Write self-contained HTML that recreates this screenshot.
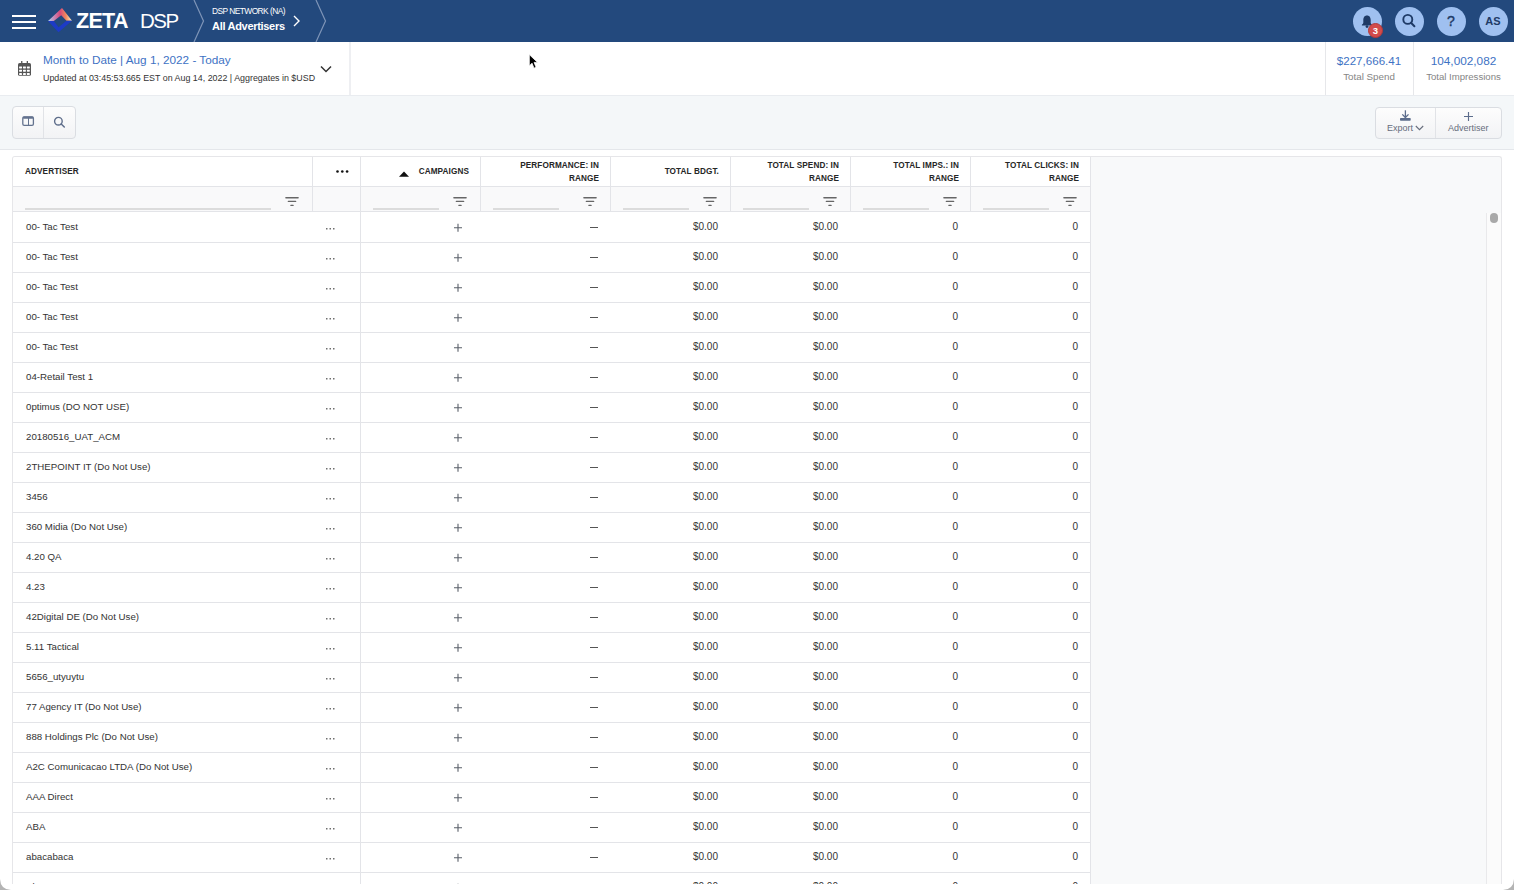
<!DOCTYPE html><html><head><meta charset="utf-8"><style>
*{box-sizing:border-box;margin:0;padding:0}
html,body{width:1514px;height:890px;overflow:hidden;background:#fff;font-family:"Liberation Sans",sans-serif;}
.abs{position:absolute} svg{display:block}
#hdr{position:absolute;left:0;top:0;width:1514px;height:42px;background:#23497d;}
#sub{position:absolute;left:0;top:42px;width:1514px;height:53px;background:#fff;}
#tb{position:absolute;left:0;top:95px;width:1514px;height:55px;background:#f4f7f9;border-bottom:1px solid #e4e7eb;border-top:1px solid #e9ecf0}
.btng{position:absolute;border:1px solid #dadde2;border-radius:4px;background:linear-gradient(#fdfdfd,#f2f3f5);}
#wrap{position:absolute;left:12px;top:156px;width:1490px;height:728px;background:#f8f9fa;border:1px solid #e6e6e9;border-bottom:none;border-radius:3px 3px 0 0;overflow:hidden}
.hc{position:absolute;font-weight:bold;font-size:8.2px;color:#262626;text-align:right;line-height:13px;letter-spacing:0.1px}
.vl{position:absolute;width:1px;background:#e3e4e8}
.hl{position:absolute;height:1px;background:#e3e4e8}
.rt{position:absolute;font-size:9.7px;color:#333;white-space:nowrap;line-height:12px}
.num{position:absolute;font-size:10px;color:#333;white-space:nowrap;text-align:right;line-height:12px}
</style></head><body>
<div id="hdr">
<div class="abs" style="left:12px;top:15px;width:24px;height:2px;background:#fff"></div>
<div class="abs" style="left:12px;top:21px;width:24px;height:2px;background:#fff"></div>
<div class="abs" style="left:12px;top:27px;width:24px;height:2px;background:#fff"></div>
<svg class="abs" style="left:0;top:0" width="80" height="42" viewBox="0 0 80 42">
<defs><linearGradient id="lg1" x1="48" y1="0" x2="72" y2="0" gradientUnits="userSpaceOnUse"><stop offset="0" stop-color="#a8d0f2"/><stop offset="0.25" stop-color="#c78bb8"/><stop offset="0.5" stop-color="#d8497a"/><stop offset="0.75" stop-color="#f08a5c"/><stop offset="1" stop-color="#f8f4d0"/></linearGradient></defs>
<path d="M48,21 L62,8 L72,20.7 L66.5,20.7 L61.2,15.3 L53.8,21 Z" fill="url(#lg1)"/>
<path d="M48,21 L53.8,21 L58.6,27.3 L66.5,20.7 L72,20.7 L58.5,32.3 Z" fill="#1d3bc6"/>
</svg>
<div class="abs" style="left:76px;top:9px;font-size:21.5px;font-weight:bold;color:#fff;letter-spacing:-0.7px;line-height:24px">ZETA</div>
<div class="abs" style="left:140px;top:8.5px;font-size:20.5px;color:#fff;line-height:24px;letter-spacing:-1.5px">DSP</div>
<svg class="abs" style="left:0;top:0;display:block" width="1514" height="42"><path d="M194 0 L203.5 21 L194 42" fill="none" stroke="#7f95b8" stroke-width="1.2"/><path d="M316 0 L325.5 21 L316 42" fill="none" stroke="#7f95b8" stroke-width="1.2"/><path d="M294 16 L299 21 L294 26" fill="none" stroke="#fff" stroke-width="1.4"/></svg>
<div class="abs" style="left:212px;top:6px;font-size:8.4px;color:#fff;line-height:10px;letter-spacing:-0.55px">DSP NETWORK (NA)</div>
<div class="abs" style="left:212px;top:20px;font-size:11px;font-weight:bold;color:#fff;line-height:13px;letter-spacing:-0.3px">All Advertisers</div>
<div class="abs" style="left:1352.5px;top:6.6px;width:29px;height:29px;border-radius:50%;background:#9fc0f0"></div>
<div class="abs" style="left:1394.5px;top:6.6px;width:29px;height:29px;border-radius:50%;background:#9fc0f0"></div>
<div class="abs" style="left:1436.5px;top:6.6px;width:29px;height:29px;border-radius:50%;background:#9fc0f0"></div>
<div class="abs" style="left:1478.5px;top:6.6px;width:29px;height:29px;border-radius:50%;background:#9fc0f0"></div>
<svg class="abs" style="left:1352px;top:6px" width="30" height="30" viewBox="0 0 30 30"><path d="M15 9.4 C12.2 9.4 11.3 11.7 11.3 14 L11.3 16.8 C11.3 17.7 10.4 18.3 9.9 18.8 L9.9 19.5 L20.1 19.5 L20.1 18.8 C19.6 18.3 18.7 17.7 18.7 16.8 L18.7 14 C18.7 11.7 17.8 9.4 15 9.4 Z" fill="#1e3a66"/><circle cx="15" cy="20.6" r="1.4" fill="#1e3a66"/></svg>
<div class="abs" style="left:1367.5px;top:22.7px;width:15.8px;height:15.8px;border-radius:50%;background:#d24b4b;border:1px solid #b33a3a;color:#fff;font-size:9.5px;font-weight:bold;text-align:center;line-height:13.5px">3</div>
<svg class="abs" style="left:1394px;top:6px" width="30" height="30" viewBox="0 0 30 30"><circle cx="13.8" cy="13.4" r="4.5" fill="none" stroke="#1e3a66" stroke-width="1.9"/><path d="M17 16.8 L20.4 20.2" stroke="#1e3a66" stroke-width="2" stroke-linecap="round"/></svg>
<div class="abs" style="left:1436px;top:13px;width:30px;text-align:center;font-size:14px;color:#1e3a66;-webkit-text-stroke:0.4px #1e3a66;line-height:16px">?</div>
<div class="abs" style="left:1478px;top:15.4px;width:30px;text-align:center;font-size:11px;font-weight:bold;color:#1e3a66;line-height:13px">AS</div>
</div>
<div id="sub">
<svg class="abs" style="left:17px;top:18px" width="16" height="18" viewBox="0 0 16 18"><rect x="1" y="3" width="13" height="12.8" rx="1.6" fill="#555"/><rect x="4.1" y="1" width="1.3" height="3" fill="#555"/><rect x="9.7" y="1" width="1.3" height="3" fill="#555"/><rect x="2.1" y="6.4" width="2.9" height="2" rx="0.4" fill="#fff"/><rect x="2.1" y="9.7" width="2.9" height="2" rx="0.4" fill="#fff"/><rect x="2.1" y="13.0" width="2.9" height="2" rx="0.4" fill="#fff"/><rect x="6.0" y="6.4" width="2.9" height="2" rx="0.4" fill="#fff"/><rect x="6.0" y="9.7" width="2.9" height="2" rx="0.4" fill="#fff"/><rect x="6.0" y="13.0" width="2.9" height="2" rx="0.4" fill="#fff"/><rect x="9.9" y="6.4" width="2.9" height="2" rx="0.4" fill="#fff"/><rect x="9.9" y="9.7" width="2.9" height="2" rx="0.4" fill="#fff"/><rect x="9.9" y="13.0" width="2.9" height="2" rx="0.4" fill="#fff"/></svg>
<div class="abs" style="left:43px;top:11px;font-size:11.75px;color:#3e72c4;line-height:14px;white-space:nowrap">Month to Date | Aug 1, 2022 - Today</div>
<div class="abs" style="left:43px;top:31px;font-size:8.9px;color:#333;line-height:11px;white-space:nowrap">Updated at 03:45:53.665 EST on Aug 14, 2022 | Aggregates in $USD</div>
<svg class="abs" style="left:319px;top:22px" width="14" height="10"><path d="M2 2.5 L7 7.5 L12 2.5" fill="none" stroke="#333" stroke-width="1.5"/></svg>
<div class="vl" style="left:349px;top:0;height:53px;width:2px;background:#eeeff2"></div>
<div class="vl" style="left:1324.5px;top:0;height:53px;width:1.5px;background:#e6e7ea"></div>
<div class="vl" style="left:1412.5px;top:0;height:53px;width:1.5px;background:#e6e7ea"></div>
<div class="abs" style="left:1325px;top:12px;width:88px;text-align:center;font-size:11.6px;color:#3e72c4;line-height:14px">$227,666.41</div>
<div class="abs" style="left:1325px;top:28.5px;width:88px;text-align:center;font-size:9.8px;color:#858585;line-height:12px">Total Spend</div>
<div class="abs" style="left:1413px;top:12px;width:101px;text-align:center;font-size:11.8px;color:#3e72c4;line-height:14px">104,002,082</div>
<div class="abs" style="left:1413px;top:28.5px;width:101px;text-align:center;font-size:9.6px;color:#858585;line-height:12px">Total Impressions</div>
</div>
<svg class="abs" style="left:525px;top:51px;z-index:10" width="16" height="20" viewBox="0 0 16 20"><path d="M4.3 3.6 L4.3 14.9 L7 12.2 L9 17.2 L11.1 16.3 L9.1 11.4 L12.6 11.4 Z" fill="#000" stroke="#fff" stroke-width="0.8"/></svg>
<div id="tb">
<div class="btng" style="left:12px;top:10px;width:64px;height:33px"></div>
<div class="vl" style="left:43px;top:11px;height:31px;background:#e1e3e7"></div>
<svg class="abs" style="left:22px;top:20px" width="13" height="11" viewBox="0 0 13 11"><rect x="0.8" y="0.8" width="10.6" height="8.6" rx="1.4" fill="none" stroke="#64738f" stroke-width="1.3"/><rect x="0.8" y="0.5" width="10.6" height="2.2" rx="1" fill="#64738f"/><rect x="6" y="1" width="1" height="8.5" fill="#64738f"/></svg>
<svg class="abs" style="left:52px;top:19px" width="14" height="14" viewBox="0 0 14 14"><circle cx="6.4" cy="6.2" r="3.8" fill="none" stroke="#5f6e8b" stroke-width="1.4"/><path d="M9.2 9 L12.3 12" stroke="#5f6e8b" stroke-width="1.5" stroke-linecap="round"/></svg>
<div class="btng" style="left:1375px;top:11px;width:127px;height:32px"></div>
<div class="vl" style="left:1435px;top:12px;height:30px;background:#e1e3e7"></div>
<svg class="abs" style="left:1399px;top:14px" width="13" height="12" viewBox="0 0 13 12"><path d="M6.4 0.3 L6.4 7.4" stroke="#5c6d8c" stroke-width="1.3"/><path d="M3.3 4.4 L6.4 7.5 L9.5 4.4" fill="none" stroke="#5c6d8c" stroke-width="1.3"/><rect x="1" y="8.1" width="10.7" height="2.7" rx="0.7" fill="#5c6d8c"/></svg>
<div class="abs" style="left:1387px;top:26.5px;font-size:9px;color:#666d7c;line-height:10px">Export</div>
<svg class="abs" style="left:1415px;top:29px" width="9" height="6"><path d="M0.8 1 L4.5 4.7 L8.2 1" fill="none" stroke="#666d7c" stroke-width="1.1"/></svg>
<svg class="abs" style="left:1463px;top:14.5px" width="11" height="11"><path d="M5.5 1 L5.5 10 M1 5.5 L10 5.5" stroke="#5c6d8c" stroke-width="1.15"/></svg>
<div class="abs" style="left:1448px;top:26.5px;font-size:9px;color:#666d7c;line-height:10px">Advertiser</div>
</div>
<div id="wrap">
<div class="abs" style="left:0;top:0;width:1077px;height:800px;background:#fff"></div>
<div class="abs" style="left:0;top:30px;width:1077px;height:24px;background:#f9f9fa"></div>
<div class="vl" style="left:1077px;top:0;height:800px"></div>
<div class="hl" style="left:0;top:29px;width:1077px"></div>
<div class="hl" style="left:0;top:54px;width:1077px"></div>
<div class="vl" style="left:299px;top:0;height:54px"></div>
<div class="vl" style="left:347px;top:0;height:800px"></div>
<div class="vl" style="left:467px;top:0;height:54px"></div>
<div class="vl" style="left:597px;top:0;height:54px"></div>
<div class="vl" style="left:717px;top:0;height:54px"></div>
<div class="vl" style="left:837px;top:0;height:54px"></div>
<div class="vl" style="left:957px;top:0;height:54px"></div>
<div class="hc" style="left:12px;top:8.300000000000011px;text-align:left">ADVERTISER</div>
<div class="abs" style="left:323px;top:13px;width:13px;height:3px"><svg width="13" height="3"><circle cx="1.5" cy="1.5" r="1.3" fill="#111"/><circle cx="6.3" cy="1.5" r="1.3" fill="#111"/><circle cx="11.1" cy="1.5" r="1.3" fill="#111"/></svg></div>
<svg class="abs" style="left:386px;top:14px" width="10" height="6"><path d="M0 5.8 L5 0.5 L10 5.8 Z" fill="#111"/></svg>
<div class="hc" style="left:347px;top:8.300000000000011px;width:109px">CAMPAIGNS</div>
<div class="hc" style="left:467px;top:1.6999999999999886px;width:119px">PERFORMANCE: IN<br>RANGE</div>
<div class="hc" style="left:597px;top:8.300000000000011px;width:109px">TOTAL BDGT.</div>
<div class="hc" style="left:717px;top:1.6999999999999886px;width:109px">TOTAL SPEND: IN<br>RANGE</div>
<div class="hc" style="left:837px;top:1.6999999999999886px;width:109px">TOTAL IMPS.: IN<br>RANGE</div>
<div class="hc" style="left:957px;top:1.6999999999999886px;width:109px">TOTAL CLICKS: IN<br>RANGE</div>
<svg class="abs" style="left:272px;top:39px" width="14" height="11"><rect x="0.2" y="1" width="13.6" height="1.4" rx="0.7" fill="#666"/><rect x="2.7" y="4.8" width="8.6" height="1.3" rx="0.6" fill="#666"/><rect x="5.3" y="8.7" width="3.4" height="1.3" rx="0.6" fill="#666"/></svg>
<div class="abs" style="left:12px;top:51px;width:246px;height:2px;background:#dcdcdc"></div>
<svg class="abs" style="left:440px;top:39px" width="14" height="11"><rect x="0.2" y="1" width="13.6" height="1.4" rx="0.7" fill="#666"/><rect x="2.7" y="4.8" width="8.6" height="1.3" rx="0.6" fill="#666"/><rect x="5.3" y="8.7" width="3.4" height="1.3" rx="0.6" fill="#666"/></svg>
<div class="abs" style="left:360px;top:51px;width:66px;height:2px;background:#dcdcdc"></div>
<svg class="abs" style="left:570px;top:39px" width="14" height="11"><rect x="0.2" y="1" width="13.6" height="1.4" rx="0.7" fill="#666"/><rect x="2.7" y="4.8" width="8.6" height="1.3" rx="0.6" fill="#666"/><rect x="5.3" y="8.7" width="3.4" height="1.3" rx="0.6" fill="#666"/></svg>
<div class="abs" style="left:480px;top:51px;width:66px;height:2px;background:#dcdcdc"></div>
<svg class="abs" style="left:690px;top:39px" width="14" height="11"><rect x="0.2" y="1" width="13.6" height="1.4" rx="0.7" fill="#666"/><rect x="2.7" y="4.8" width="8.6" height="1.3" rx="0.6" fill="#666"/><rect x="5.3" y="8.7" width="3.4" height="1.3" rx="0.6" fill="#666"/></svg>
<div class="abs" style="left:610px;top:51px;width:66px;height:2px;background:#dcdcdc"></div>
<svg class="abs" style="left:810px;top:39px" width="14" height="11"><rect x="0.2" y="1" width="13.6" height="1.4" rx="0.7" fill="#666"/><rect x="2.7" y="4.8" width="8.6" height="1.3" rx="0.6" fill="#666"/><rect x="5.3" y="8.7" width="3.4" height="1.3" rx="0.6" fill="#666"/></svg>
<div class="abs" style="left:730px;top:51px;width:66px;height:2px;background:#dcdcdc"></div>
<svg class="abs" style="left:930px;top:39px" width="14" height="11"><rect x="0.2" y="1" width="13.6" height="1.4" rx="0.7" fill="#666"/><rect x="2.7" y="4.8" width="8.6" height="1.3" rx="0.6" fill="#666"/><rect x="5.3" y="8.7" width="3.4" height="1.3" rx="0.6" fill="#666"/></svg>
<div class="abs" style="left:850px;top:51px;width:66px;height:2px;background:#dcdcdc"></div>
<svg class="abs" style="left:1050px;top:39px" width="14" height="11"><rect x="0.2" y="1" width="13.6" height="1.4" rx="0.7" fill="#666"/><rect x="2.7" y="4.8" width="8.6" height="1.3" rx="0.6" fill="#666"/><rect x="5.3" y="8.7" width="3.4" height="1.3" rx="0.6" fill="#666"/></svg>
<div class="abs" style="left:970px;top:51px;width:66px;height:2px;background:#dcdcdc"></div>
<div class="hl" style="left:0;top:85px;width:1077px"></div>
<div class="rt" style="left:13px;top:64px">00- Tac Test</div>
<svg class="abs" style="left:312.5px;top:71px" width="10" height="2"><rect x="0" y="0" width="1.5" height="1.5" fill="#6f6f6f"/><rect x="3.5" y="0" width="1.5" height="1.5" fill="#6f6f6f"/><rect x="7" y="0" width="1.5" height="1.5" fill="#6f6f6f"/></svg>
<svg class="abs" style="left:440px;top:66px" width="10" height="10"><path d="M5 0.8 L5 8.8 M1 4.8 L9 4.8" stroke="#5a606a" stroke-width="1.1"/></svg>
<div class="abs" style="left:577px;top:69.8px;width:8px;height:1.3px;background:#555"></div>
<div class="num" style="left:605px;top:64px;width:100px">$0.00</div>
<div class="num" style="left:725px;top:64px;width:100px">$0.00</div>
<div class="num" style="left:845px;top:64px;width:100px">0</div>
<div class="num" style="left:965px;top:64px;width:100px">0</div>
<div class="hl" style="left:0;top:115px;width:1077px"></div>
<div class="rt" style="left:13px;top:94px">00- Tac Test</div>
<svg class="abs" style="left:312.5px;top:101px" width="10" height="2"><rect x="0" y="0" width="1.5" height="1.5" fill="#6f6f6f"/><rect x="3.5" y="0" width="1.5" height="1.5" fill="#6f6f6f"/><rect x="7" y="0" width="1.5" height="1.5" fill="#6f6f6f"/></svg>
<svg class="abs" style="left:440px;top:96px" width="10" height="10"><path d="M5 0.8 L5 8.8 M1 4.8 L9 4.8" stroke="#5a606a" stroke-width="1.1"/></svg>
<div class="abs" style="left:577px;top:99.8px;width:8px;height:1.3px;background:#555"></div>
<div class="num" style="left:605px;top:94px;width:100px">$0.00</div>
<div class="num" style="left:725px;top:94px;width:100px">$0.00</div>
<div class="num" style="left:845px;top:94px;width:100px">0</div>
<div class="num" style="left:965px;top:94px;width:100px">0</div>
<div class="hl" style="left:0;top:145px;width:1077px"></div>
<div class="rt" style="left:13px;top:124px">00- Tac Test</div>
<svg class="abs" style="left:312.5px;top:131px" width="10" height="2"><rect x="0" y="0" width="1.5" height="1.5" fill="#6f6f6f"/><rect x="3.5" y="0" width="1.5" height="1.5" fill="#6f6f6f"/><rect x="7" y="0" width="1.5" height="1.5" fill="#6f6f6f"/></svg>
<svg class="abs" style="left:440px;top:126px" width="10" height="10"><path d="M5 0.8 L5 8.8 M1 4.8 L9 4.8" stroke="#5a606a" stroke-width="1.1"/></svg>
<div class="abs" style="left:577px;top:129.8px;width:8px;height:1.3px;background:#555"></div>
<div class="num" style="left:605px;top:124px;width:100px">$0.00</div>
<div class="num" style="left:725px;top:124px;width:100px">$0.00</div>
<div class="num" style="left:845px;top:124px;width:100px">0</div>
<div class="num" style="left:965px;top:124px;width:100px">0</div>
<div class="hl" style="left:0;top:175px;width:1077px"></div>
<div class="rt" style="left:13px;top:154px">00- Tac Test</div>
<svg class="abs" style="left:312.5px;top:161px" width="10" height="2"><rect x="0" y="0" width="1.5" height="1.5" fill="#6f6f6f"/><rect x="3.5" y="0" width="1.5" height="1.5" fill="#6f6f6f"/><rect x="7" y="0" width="1.5" height="1.5" fill="#6f6f6f"/></svg>
<svg class="abs" style="left:440px;top:156px" width="10" height="10"><path d="M5 0.8 L5 8.8 M1 4.8 L9 4.8" stroke="#5a606a" stroke-width="1.1"/></svg>
<div class="abs" style="left:577px;top:159.8px;width:8px;height:1.3px;background:#555"></div>
<div class="num" style="left:605px;top:154px;width:100px">$0.00</div>
<div class="num" style="left:725px;top:154px;width:100px">$0.00</div>
<div class="num" style="left:845px;top:154px;width:100px">0</div>
<div class="num" style="left:965px;top:154px;width:100px">0</div>
<div class="hl" style="left:0;top:205px;width:1077px"></div>
<div class="rt" style="left:13px;top:184px">00- Tac Test</div>
<svg class="abs" style="left:312.5px;top:191px" width="10" height="2"><rect x="0" y="0" width="1.5" height="1.5" fill="#6f6f6f"/><rect x="3.5" y="0" width="1.5" height="1.5" fill="#6f6f6f"/><rect x="7" y="0" width="1.5" height="1.5" fill="#6f6f6f"/></svg>
<svg class="abs" style="left:440px;top:186px" width="10" height="10"><path d="M5 0.8 L5 8.8 M1 4.8 L9 4.8" stroke="#5a606a" stroke-width="1.1"/></svg>
<div class="abs" style="left:577px;top:189.8px;width:8px;height:1.3px;background:#555"></div>
<div class="num" style="left:605px;top:184px;width:100px">$0.00</div>
<div class="num" style="left:725px;top:184px;width:100px">$0.00</div>
<div class="num" style="left:845px;top:184px;width:100px">0</div>
<div class="num" style="left:965px;top:184px;width:100px">0</div>
<div class="hl" style="left:0;top:235px;width:1077px"></div>
<div class="rt" style="left:13px;top:214px">04-Retail Test 1</div>
<svg class="abs" style="left:312.5px;top:221px" width="10" height="2"><rect x="0" y="0" width="1.5" height="1.5" fill="#6f6f6f"/><rect x="3.5" y="0" width="1.5" height="1.5" fill="#6f6f6f"/><rect x="7" y="0" width="1.5" height="1.5" fill="#6f6f6f"/></svg>
<svg class="abs" style="left:440px;top:216px" width="10" height="10"><path d="M5 0.8 L5 8.8 M1 4.8 L9 4.8" stroke="#5a606a" stroke-width="1.1"/></svg>
<div class="abs" style="left:577px;top:219.8px;width:8px;height:1.3px;background:#555"></div>
<div class="num" style="left:605px;top:214px;width:100px">$0.00</div>
<div class="num" style="left:725px;top:214px;width:100px">$0.00</div>
<div class="num" style="left:845px;top:214px;width:100px">0</div>
<div class="num" style="left:965px;top:214px;width:100px">0</div>
<div class="hl" style="left:0;top:265px;width:1077px"></div>
<div class="rt" style="left:13px;top:244px">0ptimus (DO NOT USE)</div>
<svg class="abs" style="left:312.5px;top:251px" width="10" height="2"><rect x="0" y="0" width="1.5" height="1.5" fill="#6f6f6f"/><rect x="3.5" y="0" width="1.5" height="1.5" fill="#6f6f6f"/><rect x="7" y="0" width="1.5" height="1.5" fill="#6f6f6f"/></svg>
<svg class="abs" style="left:440px;top:246px" width="10" height="10"><path d="M5 0.8 L5 8.8 M1 4.8 L9 4.8" stroke="#5a606a" stroke-width="1.1"/></svg>
<div class="abs" style="left:577px;top:249.8px;width:8px;height:1.3px;background:#555"></div>
<div class="num" style="left:605px;top:244px;width:100px">$0.00</div>
<div class="num" style="left:725px;top:244px;width:100px">$0.00</div>
<div class="num" style="left:845px;top:244px;width:100px">0</div>
<div class="num" style="left:965px;top:244px;width:100px">0</div>
<div class="hl" style="left:0;top:295px;width:1077px"></div>
<div class="rt" style="left:13px;top:274px">20180516_UAT_ACM</div>
<svg class="abs" style="left:312.5px;top:281px" width="10" height="2"><rect x="0" y="0" width="1.5" height="1.5" fill="#6f6f6f"/><rect x="3.5" y="0" width="1.5" height="1.5" fill="#6f6f6f"/><rect x="7" y="0" width="1.5" height="1.5" fill="#6f6f6f"/></svg>
<svg class="abs" style="left:440px;top:276px" width="10" height="10"><path d="M5 0.8 L5 8.8 M1 4.8 L9 4.8" stroke="#5a606a" stroke-width="1.1"/></svg>
<div class="abs" style="left:577px;top:279.8px;width:8px;height:1.3px;background:#555"></div>
<div class="num" style="left:605px;top:274px;width:100px">$0.00</div>
<div class="num" style="left:725px;top:274px;width:100px">$0.00</div>
<div class="num" style="left:845px;top:274px;width:100px">0</div>
<div class="num" style="left:965px;top:274px;width:100px">0</div>
<div class="hl" style="left:0;top:325px;width:1077px"></div>
<div class="rt" style="left:13px;top:304px">2THEPOINT IT (Do Not Use)</div>
<svg class="abs" style="left:312.5px;top:311px" width="10" height="2"><rect x="0" y="0" width="1.5" height="1.5" fill="#6f6f6f"/><rect x="3.5" y="0" width="1.5" height="1.5" fill="#6f6f6f"/><rect x="7" y="0" width="1.5" height="1.5" fill="#6f6f6f"/></svg>
<svg class="abs" style="left:440px;top:306px" width="10" height="10"><path d="M5 0.8 L5 8.8 M1 4.8 L9 4.8" stroke="#5a606a" stroke-width="1.1"/></svg>
<div class="abs" style="left:577px;top:309.8px;width:8px;height:1.3px;background:#555"></div>
<div class="num" style="left:605px;top:304px;width:100px">$0.00</div>
<div class="num" style="left:725px;top:304px;width:100px">$0.00</div>
<div class="num" style="left:845px;top:304px;width:100px">0</div>
<div class="num" style="left:965px;top:304px;width:100px">0</div>
<div class="hl" style="left:0;top:355px;width:1077px"></div>
<div class="rt" style="left:13px;top:334px">3456</div>
<svg class="abs" style="left:312.5px;top:341px" width="10" height="2"><rect x="0" y="0" width="1.5" height="1.5" fill="#6f6f6f"/><rect x="3.5" y="0" width="1.5" height="1.5" fill="#6f6f6f"/><rect x="7" y="0" width="1.5" height="1.5" fill="#6f6f6f"/></svg>
<svg class="abs" style="left:440px;top:336px" width="10" height="10"><path d="M5 0.8 L5 8.8 M1 4.8 L9 4.8" stroke="#5a606a" stroke-width="1.1"/></svg>
<div class="abs" style="left:577px;top:339.8px;width:8px;height:1.3px;background:#555"></div>
<div class="num" style="left:605px;top:334px;width:100px">$0.00</div>
<div class="num" style="left:725px;top:334px;width:100px">$0.00</div>
<div class="num" style="left:845px;top:334px;width:100px">0</div>
<div class="num" style="left:965px;top:334px;width:100px">0</div>
<div class="hl" style="left:0;top:385px;width:1077px"></div>
<div class="rt" style="left:13px;top:364px">360 Midia (Do Not Use)</div>
<svg class="abs" style="left:312.5px;top:371px" width="10" height="2"><rect x="0" y="0" width="1.5" height="1.5" fill="#6f6f6f"/><rect x="3.5" y="0" width="1.5" height="1.5" fill="#6f6f6f"/><rect x="7" y="0" width="1.5" height="1.5" fill="#6f6f6f"/></svg>
<svg class="abs" style="left:440px;top:366px" width="10" height="10"><path d="M5 0.8 L5 8.8 M1 4.8 L9 4.8" stroke="#5a606a" stroke-width="1.1"/></svg>
<div class="abs" style="left:577px;top:369.8px;width:8px;height:1.3px;background:#555"></div>
<div class="num" style="left:605px;top:364px;width:100px">$0.00</div>
<div class="num" style="left:725px;top:364px;width:100px">$0.00</div>
<div class="num" style="left:845px;top:364px;width:100px">0</div>
<div class="num" style="left:965px;top:364px;width:100px">0</div>
<div class="hl" style="left:0;top:415px;width:1077px"></div>
<div class="rt" style="left:13px;top:394px">4.20 QA</div>
<svg class="abs" style="left:312.5px;top:401px" width="10" height="2"><rect x="0" y="0" width="1.5" height="1.5" fill="#6f6f6f"/><rect x="3.5" y="0" width="1.5" height="1.5" fill="#6f6f6f"/><rect x="7" y="0" width="1.5" height="1.5" fill="#6f6f6f"/></svg>
<svg class="abs" style="left:440px;top:396px" width="10" height="10"><path d="M5 0.8 L5 8.8 M1 4.8 L9 4.8" stroke="#5a606a" stroke-width="1.1"/></svg>
<div class="abs" style="left:577px;top:399.8px;width:8px;height:1.3px;background:#555"></div>
<div class="num" style="left:605px;top:394px;width:100px">$0.00</div>
<div class="num" style="left:725px;top:394px;width:100px">$0.00</div>
<div class="num" style="left:845px;top:394px;width:100px">0</div>
<div class="num" style="left:965px;top:394px;width:100px">0</div>
<div class="hl" style="left:0;top:445px;width:1077px"></div>
<div class="rt" style="left:13px;top:424px">4.23</div>
<svg class="abs" style="left:312.5px;top:431px" width="10" height="2"><rect x="0" y="0" width="1.5" height="1.5" fill="#6f6f6f"/><rect x="3.5" y="0" width="1.5" height="1.5" fill="#6f6f6f"/><rect x="7" y="0" width="1.5" height="1.5" fill="#6f6f6f"/></svg>
<svg class="abs" style="left:440px;top:426px" width="10" height="10"><path d="M5 0.8 L5 8.8 M1 4.8 L9 4.8" stroke="#5a606a" stroke-width="1.1"/></svg>
<div class="abs" style="left:577px;top:429.8px;width:8px;height:1.3px;background:#555"></div>
<div class="num" style="left:605px;top:424px;width:100px">$0.00</div>
<div class="num" style="left:725px;top:424px;width:100px">$0.00</div>
<div class="num" style="left:845px;top:424px;width:100px">0</div>
<div class="num" style="left:965px;top:424px;width:100px">0</div>
<div class="hl" style="left:0;top:475px;width:1077px"></div>
<div class="rt" style="left:13px;top:454px">42Digital DE (Do Not Use)</div>
<svg class="abs" style="left:312.5px;top:461px" width="10" height="2"><rect x="0" y="0" width="1.5" height="1.5" fill="#6f6f6f"/><rect x="3.5" y="0" width="1.5" height="1.5" fill="#6f6f6f"/><rect x="7" y="0" width="1.5" height="1.5" fill="#6f6f6f"/></svg>
<svg class="abs" style="left:440px;top:456px" width="10" height="10"><path d="M5 0.8 L5 8.8 M1 4.8 L9 4.8" stroke="#5a606a" stroke-width="1.1"/></svg>
<div class="abs" style="left:577px;top:459.8px;width:8px;height:1.3px;background:#555"></div>
<div class="num" style="left:605px;top:454px;width:100px">$0.00</div>
<div class="num" style="left:725px;top:454px;width:100px">$0.00</div>
<div class="num" style="left:845px;top:454px;width:100px">0</div>
<div class="num" style="left:965px;top:454px;width:100px">0</div>
<div class="hl" style="left:0;top:505px;width:1077px"></div>
<div class="rt" style="left:13px;top:484px">5.11 Tactical</div>
<svg class="abs" style="left:312.5px;top:491px" width="10" height="2"><rect x="0" y="0" width="1.5" height="1.5" fill="#6f6f6f"/><rect x="3.5" y="0" width="1.5" height="1.5" fill="#6f6f6f"/><rect x="7" y="0" width="1.5" height="1.5" fill="#6f6f6f"/></svg>
<svg class="abs" style="left:440px;top:486px" width="10" height="10"><path d="M5 0.8 L5 8.8 M1 4.8 L9 4.8" stroke="#5a606a" stroke-width="1.1"/></svg>
<div class="abs" style="left:577px;top:489.8px;width:8px;height:1.3px;background:#555"></div>
<div class="num" style="left:605px;top:484px;width:100px">$0.00</div>
<div class="num" style="left:725px;top:484px;width:100px">$0.00</div>
<div class="num" style="left:845px;top:484px;width:100px">0</div>
<div class="num" style="left:965px;top:484px;width:100px">0</div>
<div class="hl" style="left:0;top:535px;width:1077px"></div>
<div class="rt" style="left:13px;top:514px">5656_utyuytu</div>
<svg class="abs" style="left:312.5px;top:521px" width="10" height="2"><rect x="0" y="0" width="1.5" height="1.5" fill="#6f6f6f"/><rect x="3.5" y="0" width="1.5" height="1.5" fill="#6f6f6f"/><rect x="7" y="0" width="1.5" height="1.5" fill="#6f6f6f"/></svg>
<svg class="abs" style="left:440px;top:516px" width="10" height="10"><path d="M5 0.8 L5 8.8 M1 4.8 L9 4.8" stroke="#5a606a" stroke-width="1.1"/></svg>
<div class="abs" style="left:577px;top:519.8px;width:8px;height:1.3px;background:#555"></div>
<div class="num" style="left:605px;top:514px;width:100px">$0.00</div>
<div class="num" style="left:725px;top:514px;width:100px">$0.00</div>
<div class="num" style="left:845px;top:514px;width:100px">0</div>
<div class="num" style="left:965px;top:514px;width:100px">0</div>
<div class="hl" style="left:0;top:565px;width:1077px"></div>
<div class="rt" style="left:13px;top:544px">77 Agency IT (Do Not Use)</div>
<svg class="abs" style="left:312.5px;top:551px" width="10" height="2"><rect x="0" y="0" width="1.5" height="1.5" fill="#6f6f6f"/><rect x="3.5" y="0" width="1.5" height="1.5" fill="#6f6f6f"/><rect x="7" y="0" width="1.5" height="1.5" fill="#6f6f6f"/></svg>
<svg class="abs" style="left:440px;top:546px" width="10" height="10"><path d="M5 0.8 L5 8.8 M1 4.8 L9 4.8" stroke="#5a606a" stroke-width="1.1"/></svg>
<div class="abs" style="left:577px;top:549.8px;width:8px;height:1.3px;background:#555"></div>
<div class="num" style="left:605px;top:544px;width:100px">$0.00</div>
<div class="num" style="left:725px;top:544px;width:100px">$0.00</div>
<div class="num" style="left:845px;top:544px;width:100px">0</div>
<div class="num" style="left:965px;top:544px;width:100px">0</div>
<div class="hl" style="left:0;top:595px;width:1077px"></div>
<div class="rt" style="left:13px;top:574px">888 Holdings Plc (Do Not Use)</div>
<svg class="abs" style="left:312.5px;top:581px" width="10" height="2"><rect x="0" y="0" width="1.5" height="1.5" fill="#6f6f6f"/><rect x="3.5" y="0" width="1.5" height="1.5" fill="#6f6f6f"/><rect x="7" y="0" width="1.5" height="1.5" fill="#6f6f6f"/></svg>
<svg class="abs" style="left:440px;top:576px" width="10" height="10"><path d="M5 0.8 L5 8.8 M1 4.8 L9 4.8" stroke="#5a606a" stroke-width="1.1"/></svg>
<div class="abs" style="left:577px;top:579.8px;width:8px;height:1.3px;background:#555"></div>
<div class="num" style="left:605px;top:574px;width:100px">$0.00</div>
<div class="num" style="left:725px;top:574px;width:100px">$0.00</div>
<div class="num" style="left:845px;top:574px;width:100px">0</div>
<div class="num" style="left:965px;top:574px;width:100px">0</div>
<div class="hl" style="left:0;top:625px;width:1077px"></div>
<div class="rt" style="left:13px;top:604px">A2C Comunicacao LTDA (Do Not Use)</div>
<svg class="abs" style="left:312.5px;top:611px" width="10" height="2"><rect x="0" y="0" width="1.5" height="1.5" fill="#6f6f6f"/><rect x="3.5" y="0" width="1.5" height="1.5" fill="#6f6f6f"/><rect x="7" y="0" width="1.5" height="1.5" fill="#6f6f6f"/></svg>
<svg class="abs" style="left:440px;top:606px" width="10" height="10"><path d="M5 0.8 L5 8.8 M1 4.8 L9 4.8" stroke="#5a606a" stroke-width="1.1"/></svg>
<div class="abs" style="left:577px;top:609.8px;width:8px;height:1.3px;background:#555"></div>
<div class="num" style="left:605px;top:604px;width:100px">$0.00</div>
<div class="num" style="left:725px;top:604px;width:100px">$0.00</div>
<div class="num" style="left:845px;top:604px;width:100px">0</div>
<div class="num" style="left:965px;top:604px;width:100px">0</div>
<div class="hl" style="left:0;top:655px;width:1077px"></div>
<div class="rt" style="left:13px;top:634px">AAA Direct</div>
<svg class="abs" style="left:312.5px;top:641px" width="10" height="2"><rect x="0" y="0" width="1.5" height="1.5" fill="#6f6f6f"/><rect x="3.5" y="0" width="1.5" height="1.5" fill="#6f6f6f"/><rect x="7" y="0" width="1.5" height="1.5" fill="#6f6f6f"/></svg>
<svg class="abs" style="left:440px;top:636px" width="10" height="10"><path d="M5 0.8 L5 8.8 M1 4.8 L9 4.8" stroke="#5a606a" stroke-width="1.1"/></svg>
<div class="abs" style="left:577px;top:639.8px;width:8px;height:1.3px;background:#555"></div>
<div class="num" style="left:605px;top:634px;width:100px">$0.00</div>
<div class="num" style="left:725px;top:634px;width:100px">$0.00</div>
<div class="num" style="left:845px;top:634px;width:100px">0</div>
<div class="num" style="left:965px;top:634px;width:100px">0</div>
<div class="hl" style="left:0;top:685px;width:1077px"></div>
<div class="rt" style="left:13px;top:664px">ABA</div>
<svg class="abs" style="left:312.5px;top:671px" width="10" height="2"><rect x="0" y="0" width="1.5" height="1.5" fill="#6f6f6f"/><rect x="3.5" y="0" width="1.5" height="1.5" fill="#6f6f6f"/><rect x="7" y="0" width="1.5" height="1.5" fill="#6f6f6f"/></svg>
<svg class="abs" style="left:440px;top:666px" width="10" height="10"><path d="M5 0.8 L5 8.8 M1 4.8 L9 4.8" stroke="#5a606a" stroke-width="1.1"/></svg>
<div class="abs" style="left:577px;top:669.8px;width:8px;height:1.3px;background:#555"></div>
<div class="num" style="left:605px;top:664px;width:100px">$0.00</div>
<div class="num" style="left:725px;top:664px;width:100px">$0.00</div>
<div class="num" style="left:845px;top:664px;width:100px">0</div>
<div class="num" style="left:965px;top:664px;width:100px">0</div>
<div class="hl" style="left:0;top:715px;width:1077px"></div>
<div class="rt" style="left:13px;top:694px">abacabaca</div>
<svg class="abs" style="left:312.5px;top:701px" width="10" height="2"><rect x="0" y="0" width="1.5" height="1.5" fill="#6f6f6f"/><rect x="3.5" y="0" width="1.5" height="1.5" fill="#6f6f6f"/><rect x="7" y="0" width="1.5" height="1.5" fill="#6f6f6f"/></svg>
<svg class="abs" style="left:440px;top:696px" width="10" height="10"><path d="M5 0.8 L5 8.8 M1 4.8 L9 4.8" stroke="#5a606a" stroke-width="1.1"/></svg>
<div class="abs" style="left:577px;top:699.8px;width:8px;height:1.3px;background:#555"></div>
<div class="num" style="left:605px;top:694px;width:100px">$0.00</div>
<div class="num" style="left:725px;top:694px;width:100px">$0.00</div>
<div class="num" style="left:845px;top:694px;width:100px">0</div>
<div class="num" style="left:965px;top:694px;width:100px">0</div>
<div class="hl" style="left:0;top:745px;width:1077px"></div>
<div class="rt" style="left:13px;top:724px">Abc</div>
<svg class="abs" style="left:312.5px;top:731px" width="10" height="2"><rect x="0" y="0" width="1.5" height="1.5" fill="#6f6f6f"/><rect x="3.5" y="0" width="1.5" height="1.5" fill="#6f6f6f"/><rect x="7" y="0" width="1.5" height="1.5" fill="#6f6f6f"/></svg>
<svg class="abs" style="left:440px;top:726px" width="10" height="10"><path d="M5 0.8 L5 8.8 M1 4.8 L9 4.8" stroke="#5a606a" stroke-width="1.1"/></svg>
<div class="abs" style="left:577px;top:729.8px;width:8px;height:1.3px;background:#555"></div>
<div class="num" style="left:605px;top:724px;width:100px">$0.00</div>
<div class="num" style="left:725px;top:724px;width:100px">$0.00</div>
<div class="num" style="left:845px;top:724px;width:100px">0</div>
<div class="num" style="left:965px;top:724px;width:100px">0</div>
<div class="vl" style="left:1473px;top:56px;height:700px;background:#e9e9eb"></div>
<div class="abs" style="left:1474px;top:56px;width:15px;height:700px;background:#fbfbfb"></div>
<div class="abs" style="left:1477px;top:56px;width:8px;height:10px;border-radius:4px;background:#a9a9a9"></div>
</div>
<svg class="abs" style="left:0;top:879px" width="12" height="11"><path d="M0 0 Q0.5 10.5 11 11 L0 11 Z" fill="#b4b4b4"/></svg>
<svg class="abs" style="left:1502px;top:879px" width="12" height="11"><path d="M12 0 Q11.5 10.5 1 11 L12 11 Z" fill="#b4b4b4"/></svg>
</body></html>
